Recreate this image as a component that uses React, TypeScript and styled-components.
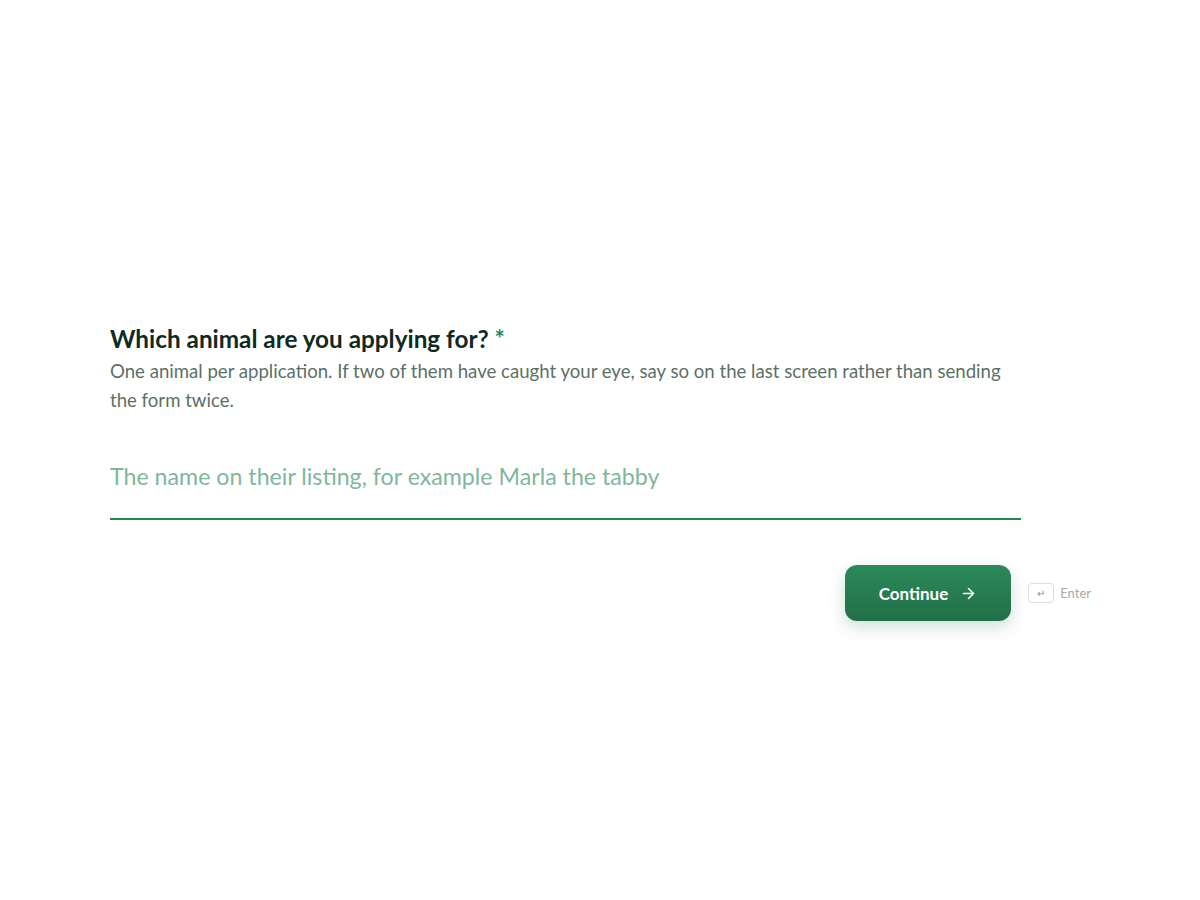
import styled, { createGlobalStyle } from "styled-components";
import { ArrowRight } from "lucide-react";

const Global = createGlobalStyle`
  body {
    margin: 0;
    background: #ffffff;
    font-family: Lato, "Noto Sans", sans-serif;
  }
`;

const App = () => {
  return (
    <>
      <Global />
      <Page>
        <Question>
          <Title>
            Which animal are you applying for? <Req>*</Req>
          </Title>
          <Help>
            One animal per application. If two of them have caught your eye,
            say so on the last screen rather than sending the form twice.
          </Help>
          <Field placeholder="The name on their listing, for example Marla the tabby" />
          <Actions>
            <Continue>
              Continue <ArrowRight size={17} strokeWidth={2.2} />
            </Continue>
            <Hint>
              <Key>↵</Key>
              Enter
            </Hint>
          </Actions>
        </Question>
      </Page>
    </>
  );
};

export default App;

const Page = styled.div`
  min-height: 100vh;
  padding: 324px 110px 0;
  box-sizing: border-box;
`;

const Question = styled.div`
  width: 911px;
`;

const Title = styled.h1`
  margin: 0;
  font-size: 24.3px;
  font-weight: 700;
  color: #0f2a1e;
  line-height: 30px;
`;

const Req = styled.span`
  color: #2a8456;
`;

const Help = styled.p`
  margin: 3px 0 0;
  font-size: 18.6px;
  line-height: 29px;
  color: #5c7066;
  max-width: 900px;
`;

const Field = styled.input`
  display: block;
  width: 100%;
  box-sizing: border-box;
  margin-top: 45px;
  padding: 0 0 26px;
  border: none;
  border-bottom: 2px solid #2a8456;
  outline: none;
  background: transparent;
  font-family: inherit;
  font-size: 23.2px;
  line-height: 32px;
  color: #11291f;
  &::placeholder {
    color: #80b79b;
  }
`;

const Actions = styled.div`
  display: flex;
  align-items: center;
  justify-content: flex-end;
  gap: 17px;
  margin-top: 45px;
  margin-right: -70px;
`;

const Continue = styled.button`
  display: flex;
  align-items: center;
  gap: 12px;
  height: 56px;
  padding: 0 34px;
  border: none;
  border-radius: 12px;
  background: linear-gradient(180deg, #2b8a59 0%, #226f48 100%);
  color: #ffffff;
  font-family: inherit;
  font-size: 17px;
  font-weight: 700;
  box-shadow: 0 6px 16px rgba(34, 111, 72, 0.22);
  cursor: pointer;
`;

const Hint = styled.div`
  display: flex;
  align-items: center;
  gap: 6px;
  font-size: 13px;
  color: #a5aaa7;
`;

const Key = styled.span`
  display: inline-flex;
  align-items: center;
  justify-content: center;
  width: 24px;
  height: 18px;
  border: 1px solid #dcdedd;
  border-radius: 4px;
  font-size: 10px;
  color: #8a908c;
`;
